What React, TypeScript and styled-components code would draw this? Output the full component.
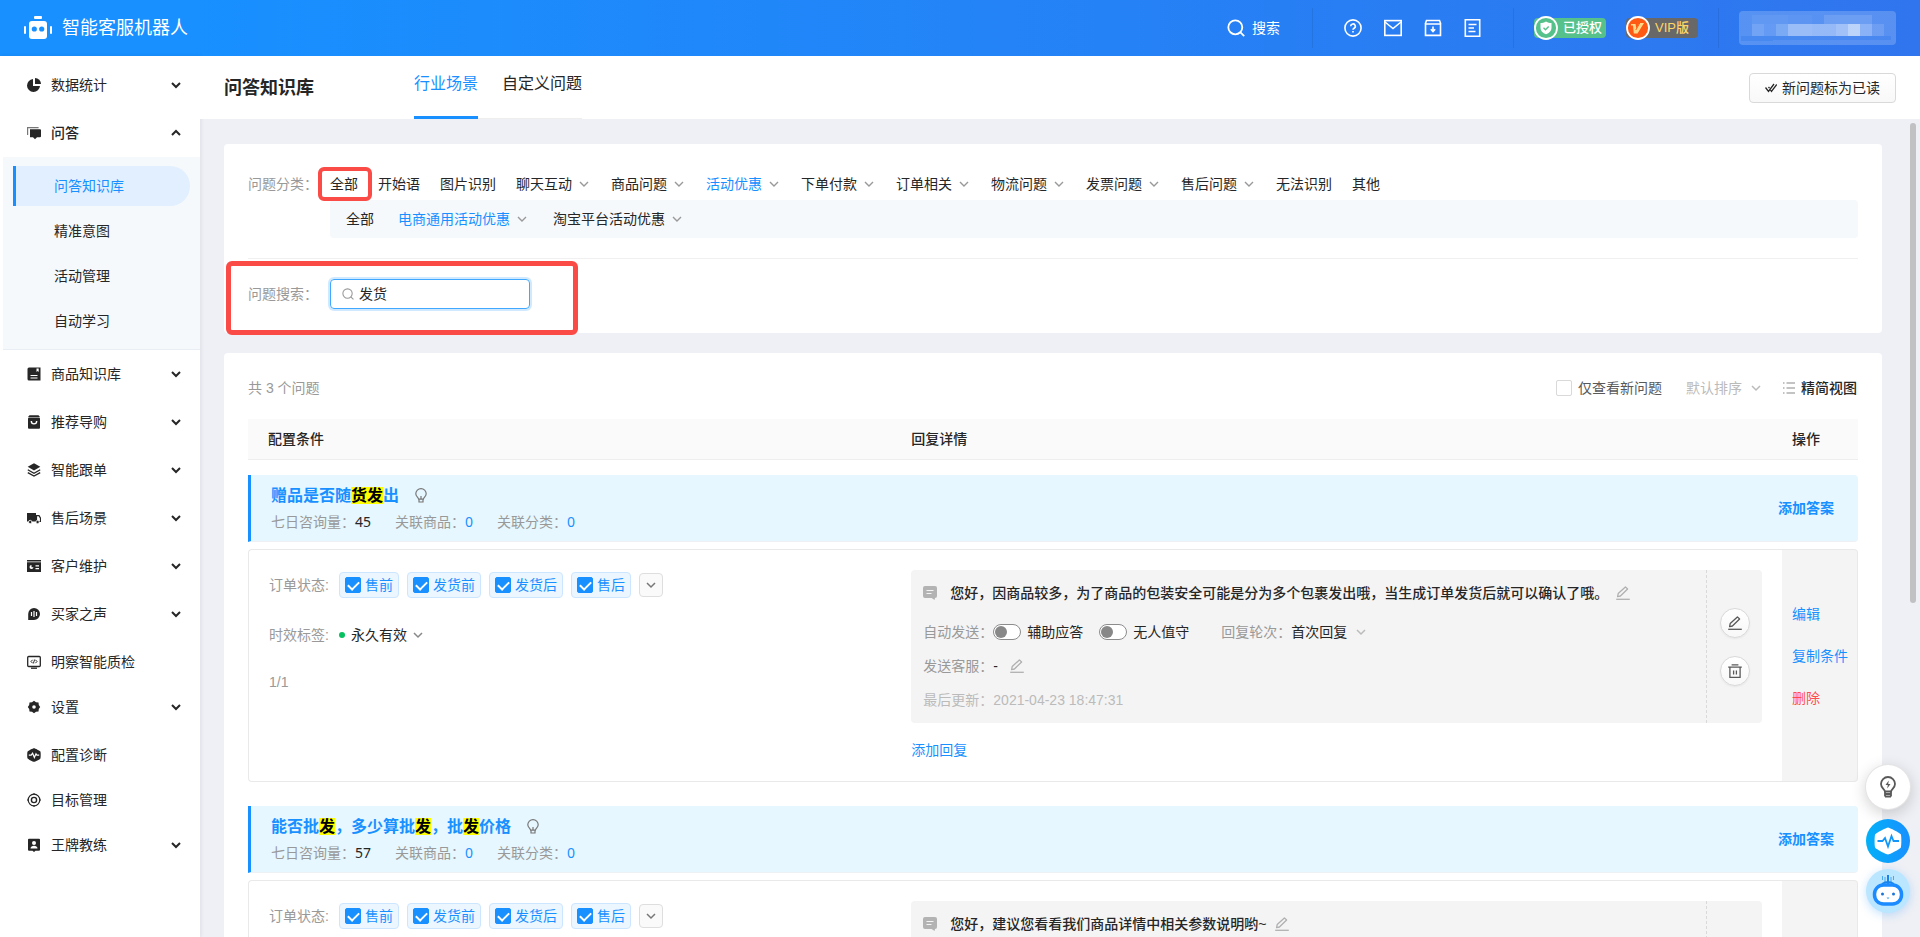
import React from "react";
import styled, { createGlobalStyle, css } from "styled-components";

const BLUE = "#1890ff";
const latin = `"Liberation Sans", "Noto Sans CJK SC", sans-serif`;
const humanist = `"Noto Sans", "Noto Sans CJK SC", sans-serif`;

const GlobalStyle = createGlobalStyle`
  * { box-sizing: border-box; }
  body {
    margin: 0;
    overflow: hidden;
    background: #eff0f5;
    color: #262626;
    font: 14px/20px ${latin};
  }
  button, input, select { font: inherit; color: inherit; margin: 0; }
  button { padding: 0; border: 0; background: none; cursor: pointer; }
  a { color: inherit; text-decoration: none; }
  svg { display: block; flex: none; }
  ul { margin: 0; padding: 0; list-style: none; }
`;

/* ---------- icons ---------- */

const Icon = ({ children }: { children?: React.ReactNode }) => (
  <svg width="14" height="14" viewBox="0 0 14 14" fill="none" aria-hidden="true">
    {children}
  </svg>
);

const Chevron = ({ size = 10, color = "#999", width = 1.5, up = false }) => (
  <svg width={size} height={size} viewBox="0 0 10 10" fill="none" stroke={color} strokeWidth={width} aria-hidden="true">
    <path d={up ? "M1 7l4-4 4 4" : "M1 3l4 4 4-4"} />
  </svg>
);

const SearchIcon = ({ size = 18, width = 1.5 }) => (
  <svg width={size} height={size} viewBox="0 0 18 18" fill="none" stroke="currentColor" strokeWidth={width} aria-hidden="true">
    <circle cx="8.3" cy="8.3" r="7" />
    <path d="M13.2 13.2l4 4" />
  </svg>
);

const PencilIcon = ({ size = 14, color = "#b0b0b0" }) => (
  <svg width={size} height={size} viewBox="0 0 14 14" fill="none" stroke={color} strokeWidth="1.3" aria-hidden="true">
    <path d="M1.6 10.6l.6-3L9.4 .9l2.2 2.1-7.2 7z" strokeLinejoin="round" />
    <path d="M.2 13.3h13.6" />
  </svg>
);

const TrashIcon = () => (
  <svg width="14" height="14" viewBox="0 0 14 14" fill="none" stroke="#595959" strokeWidth="1.3" aria-hidden="true">
    <path d="M3.6 .8h6.8M.2 3.1h13.6M1.9 3.2v10.1h10.2V3.2M5.6 6.4v4M8.4 6.4v4" />
  </svg>
);

const BulbIcon = () => (
  <svg width="12" height="16" viewBox="0 0 12 16" fill="none" stroke="#777" strokeWidth="1.2" aria-hidden="true">
    <path d="M3.6 11.2C3.4 9.4 .8 8.6 .8 5.8a5.2 5.2 0 0 1 10.4 0c0 2.8-2.6 3.6-2.8 5.4z" />
    <path d="M4 11.2v2.8h4v-2.8M6 8v3" />
  </svg>
);

const NoteIcon = () => (
  <svg width="14" height="14" viewBox="0 0 14 14" aria-hidden="true">
    <path d="M2 0h10a2 2 0 0 1 2 2v8a2 2 0 0 1-2 2l-.4 2-3-2H2a2 2 0 0 1-2-2V2a2 2 0 0 1 2-2z" fill="#b3b3b3" />
    <path d="M3.5 4.5h7M3.5 7.5h5" stroke="#f4f4f4" strokeWidth="1.2" />
  </svg>
);

const RobotLogo = () => (
  <svg width="28" height="24" viewBox="0 0 28 24" aria-hidden="true">
    <rect x="10" y="0" width="8" height="3" rx="1" fill="#fff" />
    <rect x="5" y="5" width="18" height="18" rx="3" fill="#fff" />
    <rect x="0" y="10" width="2" height="8" rx="1" fill="#fff" />
    <rect x="26" y="10" width="2" height="8" rx="1" fill="#fff" />
    <circle cx="10.3" cy="13" r="2.6" fill="#1890ff" />
    <circle cx="17.7" cy="13" r="2.6" fill="#1890ff" />
  </svg>
);

const dark = "#262626";
const menuIcons: Record<string, React.ReactNode> = {
  pie: (
    <>
      <path d="M6 1A6.5 6.5 0 1 0 13 8H6z" fill={dark} />
      <path d="M8 0a6 6 0 0 1 6 6H8z" fill={dark} />
    </>
  ),
  chat: (
    <>
      <path d="M.6 9V1.6h11" stroke="#777" strokeWidth="1.2" />
      <path d="M3 3.2h10a1 1 0 0 1 1 1v6a1 1 0 0 1-1 1h-3l-2 2-2-2H3z" fill={dark} />
    </>
  ),
  book: (
    <>
      <path d="M2 .5h11.5v13H2A1.5 1.5 0 0 1 .5 12V2A1.5 1.5 0 0 1 2 .5z" fill={dark} />
      <path d="M9.5 1.5h2.2v3.5l-1.1-1-1.1 1z" fill="#fff" />
      <path d="M3.5 8.5h7M3.5 11h7" stroke="#fff" />
    </>
  ),
  bag: (
    <>
      <path d="M2.5 .2h9L13 2H1z" fill={dark} />
      <rect x="1" y="2.6" width="12" height="11.2" rx="1" fill={dark} />
      <path d="M4.3 6a2.7 2.9 0 0 0 5.4 0" stroke="#fff" strokeWidth="1.4" />
    </>
  ),
  layers: (
    <>
      <path d="M7 .2l6.3 3.6L7 7.4 .7 3.8z" fill={dark} />
      <path d="M.8 6.7L7 10.2l6.2-3.5M.8 9.6L7 13.1l6.2-3.5" stroke={dark} strokeWidth="1.3" />
    </>
  ),
  truck: (
    <>
      <path d="M0 2h9v8.5H0z" fill={dark} />
      <path d="M9.5 4.6h2.5l1.5 2.6v3.3h-4z" stroke={dark} strokeWidth="1.2" />
      <circle cx="3.2" cy="11" r="1.7" fill={dark} stroke="#fff" strokeWidth=".8" />
      <circle cx="10.6" cy="11" r="1.7" fill={dark} stroke="#fff" strokeWidth=".8" />
    </>
  ),
  card: (
    <>
      <path d="M0 1h14v1.4H0zM0 3.2h14V13H0z" fill={dark} />
      <path d="M4.5 6a2 2 0 1 0 2 2.2h-2z" fill="#fff" />
      <path d="M8.5 6.8h3.5M8.5 9.6h3.5" stroke="#fff" strokeWidth="1.2" />
    </>
  ),
  voice: (
    <>
      <path d="M7 1a6 6 0 1 1 0 12H1.2V7A6 6 0 0 1 7 1z" fill={dark} />
      <path d="M4.5 5v4M7 4v6M9.5 5v4" stroke="#fff" strokeWidth="1.2" />
    </>
  ),
  screen: (
    <>
      <rect x=".7" y="1.5" width="12.6" height="10" rx="1" stroke={dark} strokeWidth="1.3" />
      <path d="M4 13.2h6" stroke={dark} strokeWidth="1.3" />
      <path d="M5.6 4.8L4 6.5l1.6 1.7M8.4 4.8L10 6.5 8.400 8.2M7.600 4.600L6.400 8.400" stroke={dark} />
    </>
  ),
  gear: (
    <>
      <path d="M7 .8l2 1.5 2.5 .2 .3 2.5L13.2 7l-1.4 2-.3 2.5-2.5 .2L7 13.2l-2-1.5-2.5-.2L2.2 9 .8 7l1.4-2 .3-2.5L5 2.3z" fill={dark} />
      <circle cx="7" cy="7" r="1.8" fill="#fff" />
    </>
  ),
  pulse: (
    <>
      <path d="M7 .2c1 0 6 2.6 6.4 3.3s.5 6.1 0 7S8 13.800 7 13.800 1.100 11.300 .6 10.500s-.5-6.200 0-7S6 .2 7 .2z" fill={dark} />
      <path d="M1.8 7.2h2.4l1.4-2 1.8 4.2L9 5.8l.9 1.4h2.3" stroke="#fff" strokeWidth="1.2" />
    </>
  ),
  target: (
    <>
      <circle cx="7" cy="7" r="5.8" stroke={dark} strokeWidth="1.2" />
      <circle cx="7" cy="7" r="2.6" stroke={dark} strokeWidth="1.4" />
      <path d="M7 0v2M7 12v2M0 7h2M12 7h2" stroke={dark} />
    </>
  ),
  coach: (
    <>
      <path d="M2 .8h10a1 1 0 0 1 1 1v10a1 1 0 0 1-1 1H8.5L7 14l-1.5-1.2H2a1 1 0 0 1-1-1v-10a1 1 0 0 1 1-1z" fill={dark} />
      <circle cx="7" cy="5" r="2" fill="#fff" />
      <path d="M3.5 10.4c0-3.6 7-3.6 7 0z" fill="#fff" />
    </>
  ),
};

/* ---------- shell ---------- */

const Shell = styled.div`
  display: flex;
  flex-direction: column;
  height: 100vh;
`;

const TopBar = styled.header`
  flex: none;
  display: flex;
  align-items: center;
  height: 56px;
  padding: 0 24px;
  color: #fff;
  background: linear-gradient(90deg, #1890ff 0%, #1890ff 10%, #3075ee 100%);
`;

const Brand = styled.a`
  display: flex;
  align-items: center;
  gap: 10px;
  margin-right: auto;
  font-size: 18px;
  line-height: 24px;
`;

const TopSearch = styled.button`
  display: flex;
  align-items: center;
  gap: 7px;
  margin-right: 32px;
`;

const Divider = styled.span`
  width: 1px;
  height: 40px;
  background: rgba(0, 0, 0, 0.08);
`;

const IconRow = styled.nav`
  display: flex;
  gap: 22px;
  margin: 0 32px 0 31px;
`;

const Badges = styled.div`
  display: flex;
  gap: 20px;
  margin: 0 20px;
`;

const Badge = styled.a<{ $bg: string; $ink: string }>`
  display: flex;
  align-items: center;
  width: 72px;
  height: 20px;
  border-radius: 4px;
  background: ${(p) => p.$bg};
  color: ${(p) => p.$ink};
  font-size: 13px;
  font-weight: 500;
  gap: 5px;
`;

const UserChip = styled.button`
  width: 157px;
  height: 34px;
  margin-left: 20px;
  border-radius: 4px;
  background: rgba(255, 255, 255, 0.2);
`;

const Body = styled.div`
  flex: 1;
  min-height: 0;
  display: flex;
`;

const SideBar = styled.nav`
  flex: none;
  position: relative;
  width: 200px;
  padding-top: 5px;
  background: #fff;
  box-shadow: 1px 0 4px rgba(0, 21, 41, 0.08);
`;

const MenuItem = styled.button<{ $leaf?: boolean; $open?: boolean }>`
  display: flex;
  align-items: center;
  gap: 10px;
  width: 100%;
  height: ${(p) => (p.$leaf ? "45px" : "48px")};
  padding: ${(p) => (p.$leaf ? "3px 19px 0 27px" : "0 19px 0 27px")};
  font-weight: ${(p) => (p.$open ? 500 : 400)};
  text-align: left;
  span { flex: 1; }
`;

const SubMenu = styled.ul`
  margin-left: 3px;
  padding: 9px 10px 3px;
  background: #f5f9fc;
  border-bottom: 1px solid #e8eef4;
`;

const SubLink = styled.a<{ $active?: boolean }>`
  display: block;
  height: 40px;
  margin-bottom: 5px;
  padding-left: 38px;
  border-left: 3px solid transparent;
  border-radius: 0 20px 20px 0;
  line-height: 40px;
  ${(p) =>
    p.$active &&
    css`
      color: ${BLUE};
      border-color: ${BLUE};
      background: #e1effe;
    `}
`;

const Main = styled.main`
  position: relative;
  flex: 1;
  min-width: 0;
  display: flex;
  flex-direction: column;
`;

const PageHead = styled.div`
  flex: none;
  display: flex;
  align-items: center;
  height: 63px;
  padding: 0 24px;
  background: #fff;
`;

const PageTitle = styled.h1`
  margin: 0 100px 0 0;
  font-size: 18px;
  line-height: 24px;
  font-weight: 700;
`;

const Tabs = styled.div`
  align-self: stretch;
  display: flex;
  gap: 24px;
  box-shadow: inset 0 -1px #eee;
`;

const Tab = styled.button<{ $active?: boolean }>`
  font-size: 16px;
  padding-bottom: 4px;
  border-bottom: 3px solid ${(p) => (p.$active ? BLUE : "transparent")};
  color: ${(p) => (p.$active ? BLUE : "inherit")};
`;

const MarkRead = styled.button`
  display: flex;
  align-items: center;
  gap: 5px;
  height: 30px;
  margin-left: auto;
  padding: 0 15px;
  border: 1px solid #d9d9d9;
  border-radius: 4px;
  background: linear-gradient(#fff, #f8f8f8);
`;

const ScrollArea = styled.div`
  flex: 1;
  min-height: 0;
  overflow-y: auto;
  scrollbar-width: none;
  padding: 25px 38px 0 24px;
`;

const ScrollThumb = styled.span`
  position: absolute;
  top: 67px;
  right: 4px;
  width: 6px;
  height: 480px;
  border-radius: 3px;
  background: #c1c1c4;
`;

const Card = styled.section`
  margin-bottom: 20px;
  padding: 0 24px;
  border-radius: 4px;
  background: #fff;
`;

/* ---------- filters ---------- */

const FilterRow = styled.div`
  display: flex;
  padding-top: 30px;
`;

const FieldLabel = styled.label`
  flex: none;
  width: 82px;
  color: #999;
`;

const Categories = styled.div`
  flex: 1;
  display: flex;
  flex-direction: column;
  gap: 6px;
`;

const CategoryLine = styled.div<{ $sub?: boolean }>`
  display: flex;
  align-items: center;
  gap: ${(p) => (p.$sub ? "24px" : "20px")};
  ${(p) =>
    p.$sub &&
    css`
      height: 38px;
      padding: 0 16px;
      border-radius: 4px;
      background: #f5f9fc;
    `}
`;

const Category = styled.button<{ $active?: boolean }>`
  position: relative;
  display: flex;
  align-items: center;
  gap: 7px;
  white-space: nowrap;
  color: ${(p) => (p.$active ? BLUE : "inherit")};
  svg { margin-right: 2px; }
`;

const SmallMark = styled.span`
  position: absolute;
  inset: -7px -14px -7px -12px;
  border: 4px solid #fa4b46;
  border-radius: 6px;
`;

const SearchRow = styled.div`
  position: relative;
  display: flex;
  align-items: center;
  margin-top: 20px;
  padding: 20px 0 24px;
  border-top: 1px solid #f0f0f0;
`;

const LargeMark = styled.span`
  position: absolute;
  top: 2px;
  bottom: -2px;
  left: -22px;
  width: 352px;
  border: 5px solid #fa4b46;
  border-radius: 6px;
  pointer-events: none;
`;

const SearchBox = styled.div`
  display: flex;
  align-items: center;
  gap: 5px;
  width: 200px;
  height: 30px;
  padding: 0 11px;
  border: 1px solid #40a9ff;
  border-radius: 4px;
  box-shadow: 0 0 0 2px rgba(24, 144, 255, 0.2);
  color: #999;
  input {
    flex: 1;
    min-width: 0;
    padding: 0;
    border: 0;
    outline: 0;
    background: none;
    color: #262626;
  }
`;

/* ---------- results ---------- */

const ListTools = styled.div`
  display: flex;
  align-items: center;
  height: 66px;
  padding: 4px 1px 0 0;
  color: #999;
`;

const OnlyNew = styled.label`
  display: flex;
  align-items: center;
  gap: 6px;
  margin-left: auto;
  color: #595959;
`;

const CheckBox = styled.input`
  appearance: none;
  flex: none;
  display: grid;
  place-items: center;
  width: 16px;
  height: 16px;
  border: 1px solid #d9d9d9;
  border-radius: 2px;
  background: #fff;
  &:checked {
    border-color: ${BLUE};
    background: ${BLUE};
  }
  &:checked::after {
    content: "";
    width: 5px;
    height: 9px;
    margin-bottom: 2px;
    border: solid #fff;
    border-width: 0 2px 2px 0;
    transform: rotate(45deg);
  }
`;

const SelectWrap = styled.span<{ $gap: number; $color: string }>`
  display: flex;
  align-items: center;
  gap: ${(p) => p.$gap}px;
  color: ${(p) => p.$color};
  select {
    appearance: none;
    padding: 0;
    border: 0;
    background: none;
    line-height: 20px;
  }
`;

const SortSlot = styled.div`
  margin: 0 22px 0 24px;
`;

const ViewButton = styled.button`
  display: flex;
  align-items: center;
  gap: 6px;
  color: #262626;
  font-weight: 500;
`;

const Table = styled.table`
  width: 100%;
  table-layout: fixed;
  border-spacing: 0;
  th {
    height: 41px;
    padding: 0 0 0 20px;
    border-bottom: 1px solid #eee;
    background: #fafafa;
    text-align: left;
    font-weight: 500;
  }
  th + th { padding-left: 0; }
  th + th + th { padding-left: 10px; }
  td { padding: 0; vertical-align: top; }
`;

const ConditionCol = styled.col`
  width: 41.2%;
`;

const ActionCol = styled.col`
  width: 76px;
`;

const BarCell = styled.td`
  && { padding: 15px 0 7px; }
  tbody + tbody && { padding-top: 24px; }
`;

const Bar = styled.div`
  display: flex;
  align-items: center;
  height: 67px;
  padding: 0 24px 1px 20px;
  border-left: 3px solid ${BLUE};
  border-bottom: 1px solid #eef1f3;
  border-radius: 0 4px 4px 0;
  background: #e6f7ff;
`;

const BarText = styled.div`
  flex: 1;
`;

const Question = styled.h2`
  display: flex;
  align-items: center;
  gap: 16px;
  margin: 0 0 4px;
  color: ${BLUE};
  font-size: 16px;
  line-height: 24px;
  font-weight: 700;
  mark { background: #ff0; color: #000; }
`;

const Stats = styled.div`
  display: flex;
  gap: 24px;
  color: #999;
  font-family: ${humanist};
  b { color: #262626; font-weight: 400; }
  a { color: ${BLUE}; }
`;

const AddAnswer = styled.button`
  color: ${BLUE};
  font-weight: 700;
`;

const ConditionCell = styled.td`
  border: 1px solid #e9e9e9;
  border-right: 0;
  border-radius: 4px 0 0 4px;
`;

const Conditions = styled.div`
  padding: 22px 0 20px 20px;
  color: #999;
`;

const ConditionLine = styled.div`
  display: flex;
  align-items: center;
  margin-bottom: 27px;
`;

const ConditionLabel = styled.span`
  width: 70px;
`;

const Tags = styled.div`
  display: flex;
  align-items: center;
  gap: 8px;
`;

const Tag = styled.label`
  display: flex;
  align-items: center;
  gap: 4px;
  height: 26px;
  padding: 0 5px;
  border: 1px solid #cde6ff;
  border-radius: 4px;
  background: #ebf6ff;
  color: ${BLUE};
`;

const MoreButton = styled.button`
  display: grid;
  place-items: center;
  width: 24px;
  height: 24px;
  border: 1px solid #dedede;
  border-radius: 4px;
  background: #fafafa;
`;

const Dot = styled.span`
  width: 6px;
  height: 6px;
  margin-right: 6px;
  border-radius: 50%;
  background: #07c160;
`;

const ReplyCell = styled.td`
  border: solid #e9e9e9;
  border-width: 1px 0;
`;

const ReplyWrap = styled.div`
  padding: 20px 20px 21px 0;
`;

const ReplyBox = styled.div`
  display: flex;
  height: 153px;
  margin-bottom: 17px;
  border-radius: 4px;
  background: #f4f4f4;
`;

const ReplyBody = styled.div`
  flex: 1;
  min-width: 0;
  display: flex;
  flex-direction: column;
  gap: 14px;
  padding: 13px 12px;
  color: #999;
`;

const Message = styled.p`
  display: flex;
  align-items: center;
  gap: 13px;
  margin: 0 0 5px;
  color: #262626;
  font-weight: 500;
`;

const MessageText = styled.span`
  display: flex;
  align-items: center;
  gap: 8px;
`;

const ReplyLine = styled.div<{ $muted?: boolean }>`
  display: flex;
  align-items: center;
  color: ${(p) => (p.$muted ? "#bbb" : "#999")};
`;

const Ink = styled.span`
  margin-right: 12px;
  color: #262626;
`;

const SwitchLabel = styled.label`
  display: flex;
  align-items: center;
  gap: 6px;
  margin-right: 16px;
  color: #262626;
`;

const RoundLabel = styled.span`
  margin-left: 16px;
`;

const Switch = styled.input`
  appearance: none;
  display: flex;
  align-items: center;
  width: 28px;
  height: 16px;
  padding-left: 1px;
  border: 1px solid #8c8c8c;
  border-radius: 8px;
  background: #fff;
  &::before {
    content: "";
    width: 12px;
    height: 12px;
    border-radius: 50%;
    background: #888;
  }
`;

const ReplyTools = styled.div`
  display: flex;
  flex-direction: column;
  align-items: center;
  justify-content: center;
  gap: 18px;
  width: 56px;
  border-left: 1px dashed #d9d9d9;
`;

const RoundButton = styled.button`
  display: grid;
  place-items: center;
  width: 30px;
  height: 30px;
  border: 1px solid #d9d9d9;
  border-radius: 50%;
  background: linear-gradient(#fff, #f8f8f8);
  box-shadow: 0 1px 2px rgba(0, 0, 0, 0.06);
`;

const LinkButton = styled.button<{ $danger?: boolean }>`
  display: block;
  color: ${(p) => (p.$danger ? "#ff4d4f" : BLUE)};
`;

const ActionCell = styled.td`
  border: 1px solid #e9e9e9;
  border-left: 0;
  border-radius: 0 4px 4px 0;
  background: #f4f4f4;
`;

const Actions = styled.div`
  display: flex;
  flex-direction: column;
  align-items: flex-start;
  gap: 22px;
  padding: 54px 0 0 10px;
  white-space: nowrap;
`;

const Floats = styled.div`
  position: fixed;
  right: 10px;
  bottom: 24px;
  display: flex;
  flex-direction: column;
`;

const FloatButton = styled.button<{ $bg: string; $shadow: string; $gap: number }>`
  display: grid;
  place-items: center;
  width: 44px;
  height: 44px;
  margin-top: ${(p) => p.$gap}px;
  border-radius: 50%;
  background: ${(p) => p.$bg};
  box-shadow: ${(p) => p.$shadow};
`;

/* ---------- data ---------- */

type Entry = { label: string; icon: string; leaf?: boolean; open?: boolean };
const menu: Entry[] = [
  { label: "数据统计", icon: "pie" },
  { label: "问答", icon: "chat", open: true },
  { label: "商品知识库", icon: "book" },
  { label: "推荐导购", icon: "bag" },
  { label: "智能跟单", icon: "layers" },
  { label: "售后场景", icon: "truck" },
  { label: "客户维护", icon: "card" },
  { label: "买家之声", icon: "voice" },
  { label: "明察智能质检", icon: "screen", leaf: true },
  { label: "设置", icon: "gear" },
  { label: "配置诊断", icon: "pulse", leaf: true },
  { label: "目标管理", icon: "target", leaf: true },
  { label: "王牌教练", icon: "coach" },
];
const subMenu = ["问答知识库", "精准意图", "活动管理", "自动学习"];

type Cat = { label: string; more?: boolean; active?: boolean; marked?: boolean };
const categories: Cat[] = [
  { label: "全部", marked: true },
  { label: "开始语" },
  { label: "图片识别" },
  { label: "聊天互动", more: true },
  { label: "商品问题", more: true },
  { label: "活动优惠", more: true, active: true },
  { label: "下单付款", more: true },
  { label: "订单相关", more: true },
  { label: "物流问题", more: true },
  { label: "发票问题", more: true },
  { label: "售后问题", more: true },
  { label: "无法识别" },
  { label: "其他" },
];
const subCategories: Cat[] = [
  { label: "全部" },
  { label: "电商通用活动优惠", more: true, active: true },
  { label: "淘宝平台活动优惠", more: true },
];

const questions = [
  {
    title: "赠品是否随货发出",
    hit: "货发",
    asked: 45,
    message: "您好，因商品较多，为了商品的包装安全可能是分为多个包裹发出哦，当生成订单发货后就可以确认了哦。",
  },
  {
    title: "能否批发，多少算批发，批发价格",
    hit: "发",
    asked: 57,
    message: "您好，建议您看看我们商品详情中相关参数说明哟~",
  },
];
const stages = ["售前", "发货前", "发货后", "售后"];

/* x, y, width, height, opacity of each block over the account name */
const mosaic: [number, number, number, number, number][] = [
  [13, 4, 36, 9, 0.06], [49, 4, 24, 9, 0.03], [85, 4, 48, 9, 0.12],
  [13, 13, 12, 12, 0.16], [25, 13, 12, 12, 0.08], [37, 13, 12, 12, 0.22],
  [49, 13, 24, 12, 0.4], [73, 13, 24, 12, 0.37], [97, 13, 12, 12, 0.44],
  [109, 13, 12, 12, 0.6], [121, 13, 12, 12, 0.3], [133, 13, 12, 12, 0.12],
];

/* ---------- parts ---------- */

type SelectProps = { options: string[]; label: string; gap: number; color: string; arrow: string };
const Select = ({ options, label, gap, color, arrow }: SelectProps) => (
  <SelectWrap $gap={gap} $color={color}>
    <select aria-label={label}>
      {options.map((o) => (
        <option key={o}>{o}</option>
      ))}
    </select>
    <Chevron color={arrow} />
  </SelectWrap>
);

const CategoryItem = ({ item }: { item: Cat }) => (
  <Category $active={item.active}>
    {item.label}
    {item.more && <Chevron width={1.4} />}
    {item.marked && <SmallMark />}
  </Category>
);

const Highlighted = ({ text, hit }: { text: string; hit: string }) => (
  <span>
    {text.split(hit).map((part, i) => (
      <React.Fragment key={i}>
        {i > 0 && <mark>{hit}</mark>}
        {part}
      </React.Fragment>
    ))}
  </span>
);

const QuestionRows = ({ item }: { item: (typeof questions)[number] }) => (
  <tbody>
    <tr>
      <BarCell colSpan={3}>
        <Bar>
          <BarText>
            <Question>
              <Highlighted text={item.title} hit={item.hit} />
              <BulbIcon />
            </Question>
            <Stats>
              <span>七日咨询量：<b>{item.asked}</b></span>
              <span>关联商品：<a href="#goods">0</a></span>
              <span>关联分类：<a href="#types">0</a></span>
            </Stats>
          </BarText>
          <AddAnswer>添加答案</AddAnswer>
        </Bar>
      </BarCell>
    </tr>
    <tr>
      <ConditionCell>
        <Conditions>
          <ConditionLine>
            <ConditionLabel>订单状态:</ConditionLabel>
            <Tags>
              {stages.map((s) => (
                <Tag key={s}>
                  <CheckBox type="checkbox" defaultChecked />
                  {s}
                </Tag>
              ))}
              <MoreButton aria-label="更多">
                <Chevron color="#777" />
              </MoreButton>
            </Tags>
          </ConditionLine>
          <ConditionLine>
            <ConditionLabel>时效标签:</ConditionLabel>
            <Dot />
            <Select label="时效标签" options={["永久有效", "限时有效"]} gap={6} color="#262626" arrow="#888" />
          </ConditionLine>
          1/1
        </Conditions>
      </ConditionCell>
      <ReplyCell>
        <ReplyWrap>
          <ReplyBox>
            <ReplyBody>
              <Message>
                <NoteIcon />
                <MessageText>
                  {item.message}
                  <button aria-label="编辑回复"><PencilIcon /></button>
                </MessageText>
              </Message>
              <ReplyLine>
                自动发送：
                <SwitchLabel><Switch type="checkbox" role="switch" />辅助应答</SwitchLabel>
                <SwitchLabel><Switch type="checkbox" role="switch" />无人值守</SwitchLabel>
                <RoundLabel>回复轮次：</RoundLabel>
                <Select label="回复轮次" options={["首次回复", "每次回复"]} gap={9} color="#262626" arrow="#bbb" />
              </ReplyLine>
              <ReplyLine>
                发送客服：<Ink>-</Ink>
                <button aria-label="编辑发送客服"><PencilIcon /></button>
              </ReplyLine>
              <ReplyLine $muted>最后更新：2021-04-23 18:47:31</ReplyLine>
            </ReplyBody>
            <ReplyTools>
              <RoundButton aria-label="编辑"><PencilIcon color="#595959" /></RoundButton>
              <RoundButton aria-label="删除"><TrashIcon /></RoundButton>
            </ReplyTools>
          </ReplyBox>
          <LinkButton>添加回复</LinkButton>
        </ReplyWrap>
      </ReplyCell>
      <ActionCell>
        <Actions>
          <LinkButton>编辑</LinkButton>
          <LinkButton>复制条件</LinkButton>
          <LinkButton $danger>删除</LinkButton>
        </Actions>
      </ActionCell>
    </tr>
  </tbody>
);

const Header = () => (
  <TopBar>
    <Brand href="#home"><RobotLogo />智能客服机器人</Brand>
    <TopSearch><SearchIcon width={1.8} />搜索</TopSearch>
    <Divider />
    <IconRow>
      <a href="#help" aria-label="帮助">
        <svg width="18" height="18" viewBox="0 0 18 18" fill="none" stroke="#fff" strokeWidth="1.6" aria-hidden="true">
          <circle cx="9" cy="9" r="8.1" />
          <path d="M6.700 7.200a2.300 2.300 0 1 1 3.400 2c-.8 .5-1.100 .8-1.100 1.600" />
          <path d="M9 12v1.600" />
        </svg>
      </a>
      <a href="#mail" aria-label="邮件">
        <svg width="18" height="18" viewBox="0 0 18 18" fill="none" stroke="#fff" strokeWidth="1.6" aria-hidden="true">
          <rect x=".8" y="1.6" width="16.4" height="14.8" />
          <path d="M1 3l8 6.500L17 3" />
        </svg>
      </a>
      <a href="#inbox" aria-label="下载">
        <svg width="18" height="18" viewBox="0 0 18 18" fill="none" stroke="#fff" strokeWidth="1.6" aria-hidden="true">
          <path d="M1.500 16.400V5h15v11.400zM1.200 5L2.500 1.500h13L16.800 5M9 7.500v5M6.800 10.300L9 12.500l2.200-2.200" />
        </svg>
      </a>
      <a href="#docs" aria-label="文档">
        <svg width="17" height="18" viewBox="0 0 17 18" fill="none" stroke="#fff" strokeWidth="1.6" aria-hidden="true">
          <path d="M1.300 .8h14.400v16.400H1.300zM4.500 5.500h8M4.500 9h5.500M4.500 12.500h7" />
        </svg>
      </a>
    </IconRow>
    <Divider />
    <Badges>
      <Badge href="#license" $bg="#57c18b" $ink="#fff">
        <svg width="24" height="24" viewBox="0 0 24 24" aria-hidden="true">
          <circle cx="12" cy="12" r="11" fill="#57c18b" stroke="#fff" strokeWidth="1.8" />
          <path d="M12 5.500c2 1.200 3.500 1.500 5.500 1.500v5c0 3-2.200 5-5.500 6.200C8.700 17 6.500 15 6.500 12V7c2 0 3.500-.3 5.500-1.500z" fill="#fff" />
          <path d="M9.500 11.800l2 2 3.200-3.300" fill="none" stroke="#57c18b" strokeWidth="1.4" />
        </svg>
        已授权
      </Badge>
      <Badge href="#vip" $bg="#686868" $ink="#ffd666">
        <svg width="24" height="24" viewBox="0 0 24 24" aria-hidden="true">
          <circle cx="12" cy="12" r="11" fill="#ff5a14" stroke="#fff" strokeWidth="1.8" />
          <path d="M5 8h4.500l.8 4.500L13.500 7H18l-6.500 10.500H7.800L7 9.500H5z" fill="#ffd98a" />
          <path d="M9.800 14l4-7" stroke="#ff5a14" />
        </svg>
        VIP版
      </Badge>
    </Badges>
    <Divider />
    <UserChip aria-label="账号">
      <svg width="157" height="34" viewBox="0 0 157 34" aria-hidden="true">
        {mosaic.map(([x, y, w, h, o]) => (
          <rect key={`${x}-${y}`} x={x} y={y} width={w} height={h} fill="#fff" opacity={o} />
        ))}
        <path d="M2 25h150v4H34v1H2z" fill="#2f78ee" opacity=".35" />
      </svg>
    </UserChip>
  </TopBar>
);

const Side = () => (
  <SideBar>
    {menu.map((m) => (
      <React.Fragment key={m.label}>
        <MenuItem $leaf={m.leaf} $open={m.open}>
          <Icon>{menuIcons[m.icon]}</Icon>
          <span>{m.label}</span>
          {!m.leaf && <Chevron color={dark} width={2} up={m.open} />}
        </MenuItem>
        {m.open && (
          <SubMenu>
            {subMenu.map((s, i) => (
              <li key={s}><SubLink href="#sub" $active={i === 0}>{s}</SubLink></li>
            ))}
          </SubMenu>
        )}
      </React.Fragment>
    ))}
  </SideBar>
);

const FloatingTools = () => (
  <Floats>
    <FloatButton aria-label="提示" $bg="#fff" $gap={0} $shadow="0 0 0 1px #e4e4e4, 0 4px 16px rgba(0,0,0,.2)">
      <svg width="16" height="22" viewBox="0 0 16 22" fill="none" stroke="#595959" strokeWidth="1.8" aria-hidden="true">
        <path d="M5 15.500C4.600 13 1 12 1 8a7 7 0 0 1 14 0c0 4-3.600 5-4 7.500z" />
        <path d="M5 18h6M5 20.500h6M5 15v5.500M11 15v5.500" />
        <path d="M8.800 4.500L5.500 9h2.300l-.6 3.500L10.500 8H8.200z" fill="#595959" stroke="none" />
      </svg>
    </FloatButton>
    <FloatButton aria-label="诊断" $bg="linear-gradient(90deg, #03b1f8, #1890ff)" $gap={10} $shadow="none">
      <svg width="28" height="28" viewBox="0 0 28 28" fill="none" aria-hidden="true">
        <path d="M14 .5c1.500 0 12 5.500 12.800 6.800s.7 12.300 0 13.400S15.500 27.500 14 27.500 2 22 1.200 20.700s-.8-12.100 0-13.400S12.500 .5 14 .5z" fill="#fff" />
        <path d="M3.500 14h5l2.500-3 3 8.500 3.500-10.500 2 5h5.500" stroke="#1296f8" strokeWidth="1.8" />
      </svg>
    </FloatButton>
    <FloatButton aria-label="机器人" $bg="#bae6ff" $gap={6} $shadow="0 2px 10px rgba(24,144,255,.25)">
      <svg width="32" height="32" viewBox="0 0 32 32" fill="none" aria-hidden="true">
        <path d="M10.500 1v4M13 2v5M19 2v5M21.500 1v4" stroke="#4aa8f0" />
        <path d="M16 0v9M10 9q6-4 12 0" stroke="#1b84e8" strokeWidth="2" />
        <rect x="2.500" y="10" width="27" height="19" rx="9" fill="#fff" stroke="#1b8bff" strokeWidth="3.500" />
        <circle cx="10.500" cy="19" r="1.500" fill="#1b74d8" />
        <circle cx="21.500" cy="19" r="1.500" fill="#1b74d8" />
        <path d="M14.500 22.500h3l-1.500 1.700z" fill="#4aa8f0" />
      </svg>
    </FloatButton>
  </Floats>
);

export default function App() {
  return (
    <Shell>
      <GlobalStyle />
      <Header />
      <Body>
        <Side />
        <Main>
          <PageHead>
            <PageTitle>问答知识库</PageTitle>
            <Tabs>
              <Tab $active>行业场景</Tab>
              <Tab>自定义问题</Tab>
            </Tabs>
            <MarkRead>
              <svg width="12" height="10" viewBox="0 0 12 10" fill="none" stroke="#262626" strokeWidth="1.3" aria-hidden="true">
                <path d="M.5 4.500l3 4L9 1M3.500 4l1 1.200M5.500 7l1 1.500L11.800 1.500" />
              </svg>
              新问题标为已读
            </MarkRead>
          </PageHead>
          <ScrollArea>
            <Card>
              <FilterRow>
                <FieldLabel as="span">问题分类：</FieldLabel>
                <Categories>
                  <CategoryLine>
                    {categories.map((c) => <CategoryItem key={c.label} item={c} />)}
                  </CategoryLine>
                  <CategoryLine $sub>
                    {subCategories.map((c) => <CategoryItem key={c.label} item={c} />)}
                  </CategoryLine>
                </Categories>
              </FilterRow>
              <SearchRow>
                <FieldLabel htmlFor="question-search">问题搜索：</FieldLabel>
                <SearchBox>
                  <SearchIcon size={12} width={1.6} />
                  <input id="question-search" type="text" defaultValue="发货" />
                </SearchBox>
                <LargeMark />
              </SearchRow>
            </Card>
            <Card>
              <ListTools>
                共 3 个问题
                <OnlyNew><CheckBox type="checkbox" />仅查看新问题</OnlyNew>
                <SortSlot>
                  <Select label="排序" options={["默认排序", "时间排序"]} gap={9} color="#bbb" arrow="#bbb" />
                </SortSlot>
                <ViewButton>
                  <svg width="12" height="12" viewBox="0 0 12 12" stroke="#888" strokeWidth="1.2" aria-hidden="true">
                    <path d="M0 1h1.500M3.500 1H12M0 6h1.500M3.500 6H12M0 11h1.500M3.500 11H12" />
                  </svg>
                  精简视图
                </ViewButton>
              </ListTools>
              <Table>
                <colgroup>
                  <ConditionCol />
                  <col />
                  <ActionCol />
                </colgroup>
                <thead>
                  <tr>
                    <th>配置条件</th>
                    <th>回复详情</th>
                    <th>操作</th>
                  </tr>
                </thead>
                {questions.map((q) => <QuestionRows key={q.title} item={q} />)}
              </Table>
            </Card>
          </ScrollArea>
          <ScrollThumb />
        </Main>
      </Body>
      <FloatingTools />
    </Shell>
  );
}
